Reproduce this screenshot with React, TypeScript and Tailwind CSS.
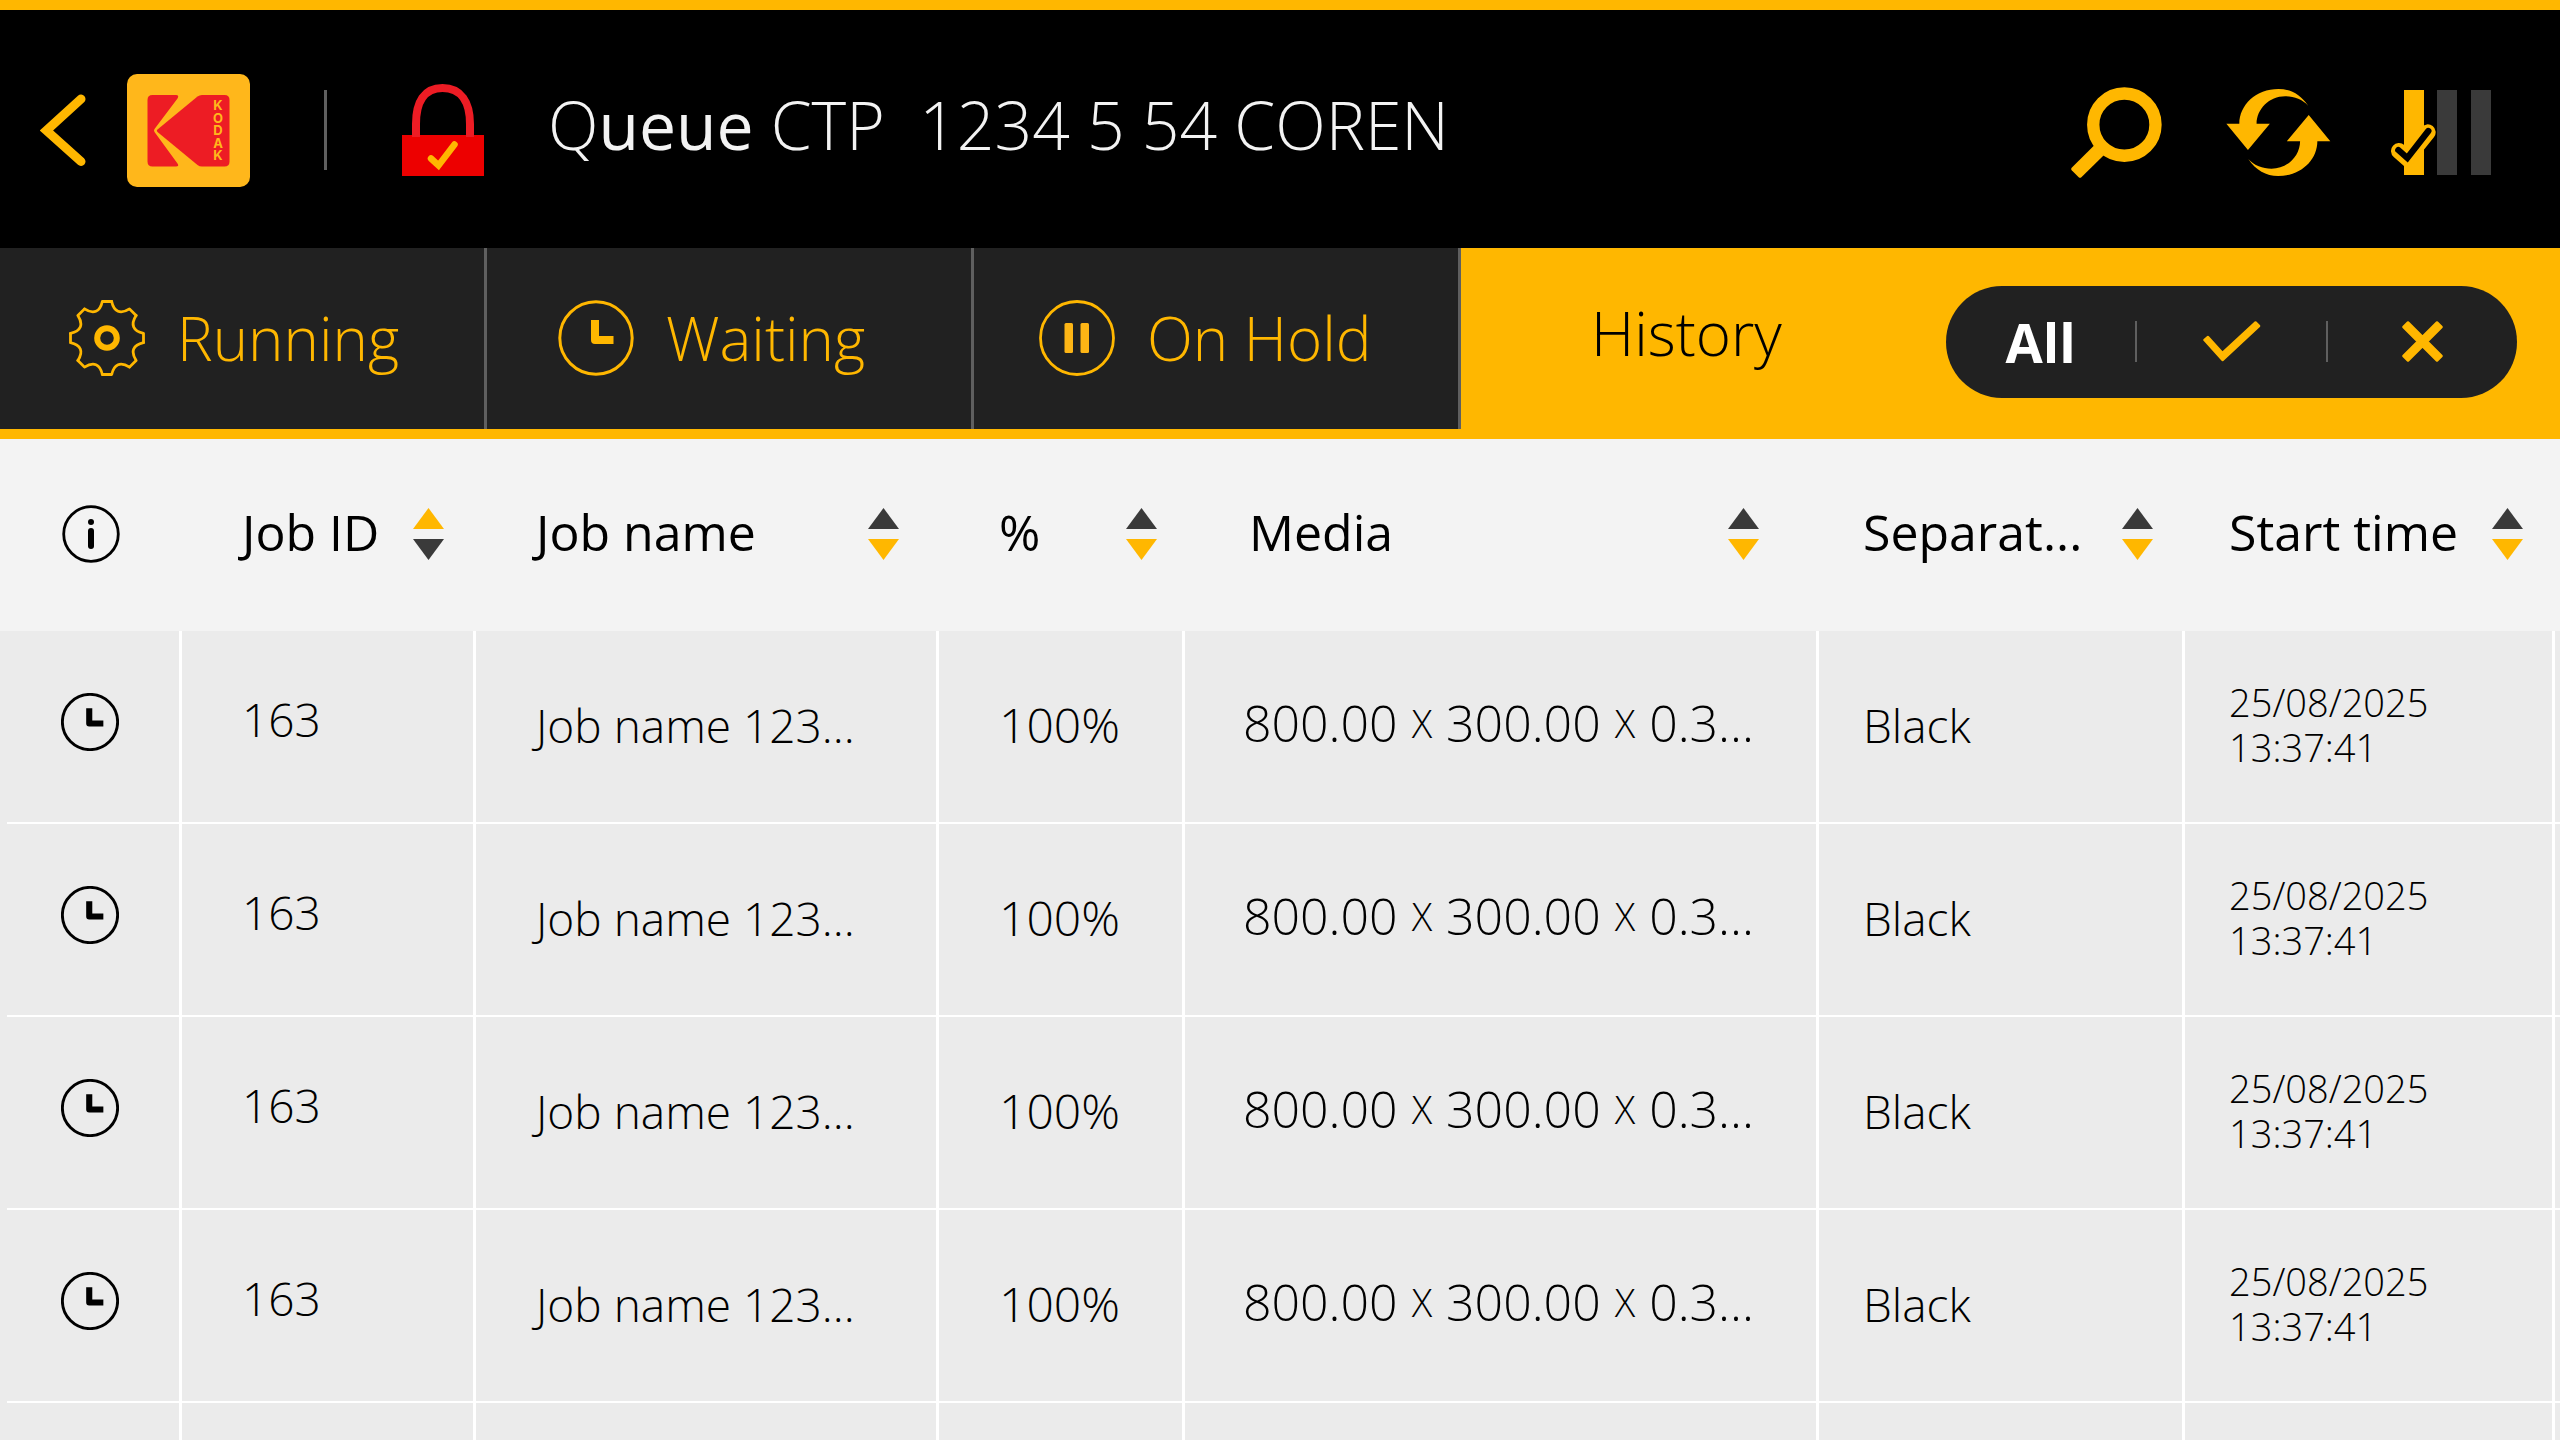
import React, { useState } from 'react';

type Filter = 'all' | 'done' | 'failed';

interface Column {
  key: string;
  label: string;
  width: string;
  padding: string;
}

const columns: Column[] = [
  { key: 'id', label: 'Job ID', width: 'w-[294px]', padding: 'pl-[60px] pr-8' },
  { key: 'name', label: 'Job name', width: 'w-[463px]', padding: 'pl-[60px] pr-10' },
  { key: 'percent', label: '%', width: 'w-[246px]', padding: 'pl-[60px] pr-7' },
  { key: 'media', label: 'Media', width: '', padding: 'pl-16 pr-[60px]' },
  { key: 'separation', label: 'Separat...', width: 'w-[366px]', padding: 'pl-11 pr-8' },
  { key: 'start', label: 'Start time', width: 'w-[370px]', padding: 'pl-11 pr-8' },
];

const jobs = Array.from({ length: 4 }, (_, i) => ({
  key: i,
  id: '163',
  name: 'Job name 123...',
  percent: '100%',
  size: ['800.00', '300.00', '0.3...'],
  separation: 'Black',
  date: '25/08/2025',
  time: '13:37:41',
}));

const cell = 'border-r-3 border-b-2 border-white p-0';

function ClockIcon({ className, stroke = 3 }: { className: string; stroke?: number }) {
  return (
    <svg viewBox="-38 -38 76 76" className={className} fill="none" stroke="currentColor">
      <circle r="36.2" strokeWidth={stroke} />
      <path d="M-1 -14V2H13.5" strokeWidth="8" strokeLinecap="square" strokeLinejoin="round" />
    </svg>
  );
}

function GearIcon() {
  return (
    <svg viewBox="-38 -38 76 76" className="size-[76px] shrink-0" fill="none" stroke="currentColor">
      {[0, 45, 90, 135, 180, 225, 270, 315].map((angle) => (
        <path
          key={angle}
          transform={`rotate(${angle})`}
          d="M4.7 -36.5H-4.7C-7 -26 -13.5 -23.3 -22.5 -29.1"
          strokeWidth="2.8"
          strokeLinecap="round"
          strokeLinejoin="round"
        />
      ))}
      <circle r="9.8" strokeWidth="6" />
    </svg>
  );
}

function PauseIcon() {
  return (
    <svg viewBox="-38 -38 76 76" className="size-[76px] shrink-0" fill="none" stroke="currentColor">
      <circle r="36.5" strokeWidth="2.8" />
      <rect x="-12.5" y="-15" width="8.5" height="30" rx="1.5" fill="#fdb515" stroke="none" />
      <rect x="3.5" y="-15" width="8.5" height="30" rx="1.5" fill="#fdb515" stroke="none" />
    </svg>
  );
}

function InfoIcon() {
  return (
    <svg viewBox="-29 -29 58 58" className="size-[58px]" fill="none" stroke="currentColor">
      <circle r="27.3" strokeWidth="2.8" />
      <circle cy="-12" r="3" fill="currentColor" stroke="none" />
      <path d="M0 -3V12" strokeWidth="6" strokeLinecap="round" />
    </svg>
  );
}

function Logo() {
  return (
    <svg viewBox="0 0 123 113" className="h-[113px] w-[123px]">
      <rect width="123" height="113" rx="10" fill="#ffb71b" />
      <path
        d="M25.5 21H49Q52.500 21 50.500 24.500L27.500 55Q26.500 56.500 27.500 58L50.500 89.500Q52.500 92.500 49 92.500H25.500Q20.500 92.500 20.500 87.500V26Q20.500 21 25.500 21Z"
        fill="#ed1c24"
      />
      <path
        d="M75 21H97.500Q102.500 21 102.500 26V87.500Q102.500 92.500 97.500 92.500H75Q72.500 92.500 70.500 91L30.500 58Q29 56.700 30.500 55.400L70.500 22.500Q72.500 21 75 21Z"
        fill="#ed1c24"
      />
      {['K', 'O', 'D', 'A', 'K'].map((letter, i) => (
        <text
          key={i}
          x="91"
          y={36 + i * 12.6}
          textAnchor="middle"
          fontSize="13"
          className="font-['Inter',sans-serif] font-bold"
          fill="#ffb71b"
        >
          {letter}
        </text>
      ))}
    </svg>
  );
}

function LockIcon() {
  return (
    <svg viewBox="0 0 82 92" className="h-[92px] w-[82px]" fill="none">
      <rect y="51" width="82" height="41" fill="#ed0000" />
      <path d="M14 53V40C14 18 22 4 40.500 4S68 18 68 40V53" stroke="#ed1c24" strokeWidth="8" />
      <path d="M29 74.500L36.500 81.500L52.500 60.500" stroke="#ffb700" strokeWidth="6.500" strokeLinecap="round" />
    </svg>
  );
}

function SearchIcon() {
  return (
    <svg viewBox="95 80 272 272" className="size-[91px]" fill="none">
      <circle cx="254.500" cy="192.500" r="93" stroke="#ffb700" strokeWidth="37" />
      <path d="M164 255L97 321Q94 325 97 329L118 350Q122 353 126 350L193 284Z" fill="#ffb700" />
    </svg>
  );
}

function RefreshIcon() {
  const arrow =
    'M600 192C600 135 650 87 718 87C755 87 785 104 808 138C790 118 765 109 738 109C690 109 652 148 652 192H692L626 271L561 192Z';
  return (
    <svg viewBox="561 87 314 262" className="h-[87px] w-[105px]" fill="#ffb700">
      <path d={arrow} />
      <path d={arrow} transform="rotate(180 717.500 218)" />
    </svg>
  );
}

function PlatesIcon() {
  return (
    <svg viewBox="1053 90 300 255" className="h-[85px] w-[100px]" fill="none">
      <rect x="1092" y="90" width="60" height="255" fill="#ffb700" />
      <rect x="1191" y="90" width="60" height="255" fill="#3a3a3a" />
      <rect x="1293" y="90" width="60" height="255" fill="#3a3a3a" />
      <path d="M1077 273L1101 294L1163 217" stroke="#ffb700" strokeWidth="48" strokeLinecap="round" />
      <path d="M1075 270L1102 294L1165 213" stroke="#000" strokeWidth="19" strokeLinecap="round" />
    </svg>
  );
}

function CheckIcon() {
  return (
    <svg viewBox="0 0 58 41" className="h-[41px] w-[58px]" fill="currentColor" stroke="currentColor">
      <path d="M1.500 19L5 16L19.500 32L52.500 1.500L56 5L19.500 39Z" strokeWidth="2.500" strokeLinejoin="round" />
    </svg>
  );
}

function CrossIcon() {
  return (
    <svg viewBox="0 0 41 41" className="size-[41px]" fill="currentColor" stroke="currentColor">
      <path
        d="M1.500 6L6 1.500L20.500 16L35 1.500L39.500 6L25 20.500L39.500 35L35 39.500L20.500 25L6 39.500L1.500 35L16 20.500Z"
        strokeWidth="2.500"
        strokeLinejoin="round"
      />
    </svg>
  );
}

function SortArrows({ ascending }: { ascending: boolean }) {
  return (
    <svg viewBox="0 0 31 52" className="h-[52px] w-[31px] shrink-0">
      <path d="M15.500 0L31 21H0Z" fill={ascending ? '#ffb700' : '#3a3a3a'} />
      <path d="M15.500 52L0 31H31Z" fill={ascending ? '#3a3a3a' : '#ffb700'} />
    </svg>
  );
}

export default function App() {
  const [filter, setFilter] = useState<Filter>('all');
  const [sortKey, setSortKey] = useState('id');

  const tab =
    'flex w-[487px] items-center gap-8 border-r-3 border-[#5f5f5f] bg-[#212121] pb-0.5 text-[60px] leading-none font-light text-[#ffb700]';

  return (
    <div className="flex h-screen flex-col overflow-hidden bg-[#ebebeb] font-['Open_Sans','Noto_Sans',sans-serif] text-black">
      <header className="flex h-[248px] shrink-0 items-center border-t-10 border-[#ffb700] bg-black pt-0.5 pr-[69px] pl-10">
        <button aria-label="Back" className="mr-[41px]">
          <svg viewBox="0 0 46 72" className="h-[72px] w-[46px]" fill="none" stroke="#ffb700" strokeWidth="9">
            <path d="M41 5L6.500 36.500L41 67.500" strokeLinecap="round" />
          </svg>
        </button>
        <Logo />
        <div className="mr-[75px] ml-[74px] h-20 w-[3px] bg-[#5f5f5f]" />
        <LockIcon />
        <h1 className="ml-16 pb-3 text-[66px] leading-none font-light whitespace-pre text-[#f3f3f3]">
          Q<span className="font-medium">ueue</span> CTP{'  '}1234 5 54 COREN
        </h1>
        <div className="mt-1 ml-auto flex items-center">
          <button aria-label="Search" className="mr-16">
            <SearchIcon />
          </button>
          <button aria-label="Refresh" className="mr-[60px]">
            <RefreshIcon />
          </button>
          <button aria-label="Plate status">
            <PlatesIcon />
          </button>
        </div>
      </header>

      <nav className="flex h-[191px] shrink-0 border-b-10 border-[#ffb700] bg-[#ffb700]">
        <button className={`${tab} pl-[69px]`}>
          <GearIcon />
          Running
        </button>
        <button className={`${tab} pl-[71px]`}>
          <ClockIcon className="size-[76px] shrink-0" />
          Waiting
        </button>
        <button className={`${tab} pl-[65px]`}>
          <PauseIcon />
          On Hold
        </button>
        <div className="flex flex-1 items-center justify-between pr-[43px] pl-[130px]">
          <button className="pb-3 text-[60px] leading-none font-light">History</button>
          <div className="mt-1.5 flex h-28 w-[571px] items-center rounded-full bg-[#212121] text-[#ffb700]">
            <button
              onClick={() => setFilter('all')}
              aria-pressed={filter === 'all'}
              className="flex-1 text-[54px] leading-none font-bold text-white"
            >
              All
            </button>
            <div className="h-[41px] w-0.5 bg-[#5f5f5f]" />
            <button
              onClick={() => setFilter('done')}
              aria-pressed={filter === 'done'}
              aria-label="Completed"
              className="flex flex-1 justify-center"
            >
              <CheckIcon />
            </button>
            <div className="h-[41px] w-0.5 bg-[#5f5f5f]" />
            <button
              onClick={() => setFilter('failed')}
              aria-pressed={filter === 'failed'}
              aria-label="Failed"
              className="flex flex-1 justify-center"
            >
              <CrossIcon />
            </button>
          </div>
        </div>
      </nav>

      <table className="w-full table-fixed border-separate border-spacing-0">
        <thead className="bg-[#f3f3f3]">
          <tr className="h-48">
            <th className="w-[182px] p-0 pb-0.5 pl-[62px]">
              <InfoIcon />
            </th>
            {columns.map((col) => (
              <th key={col.key} className={`${col.width} p-0 pb-0.5 font-normal`}>
                <button
                  onClick={() => setSortKey(col.key)}
                  className={`${col.padding} flex w-full items-center justify-between text-[50px] leading-none whitespace-nowrap`}
                >
                  <span className="pb-1">{col.label}</span>
                  <SortArrows ascending={sortKey === col.key} />
                </button>
              </th>
            ))}
            <th className="w-[5px] p-0" />
          </tr>
        </thead>
        <tbody className="text-[46px] leading-none font-light whitespace-nowrap">
          {jobs.map((job) => (
            <tr key={job.key} className="h-[193px]">
              <td className="relative border-r-3 border-white p-0 pb-3 pl-[61px] after:absolute after:right-0 after:bottom-0 after:left-[7px] after:h-0.5 after:bg-white">
                <ClockIcon className="size-[58px]" stroke={3.8} />
              </td>
              <td className={`${cell} pb-4 pl-[60px]`}>{job.id}</td>
              <td className={`${cell} pb-1 pl-[60px]`}>{job.name}</td>
              <td className={`${cell} pb-1 pl-[60px] text-[48px]`}>{job.percent}</td>
              <td className={`${cell} pb-2 pl-[58px]`}>
                <div className="flex items-center gap-3.5 text-[50px]">
                  {job.size[0]}
                  <span className="text-[38px]">X</span>
                  {job.size[1]}
                  <span className="text-[38px]">X</span>
                  {job.size[2]}
                </div>
              </td>
              <td className={`${cell} pb-1 pl-11`}>{job.separation}</td>
              <td className={`${cell} pb-1 pl-11 text-[38px] leading-[45px]`}>
                {job.date}
                <br />
                {job.time}
              </td>
              <td className="border-b-2 border-white p-0" />
            </tr>
          ))}
          {/* empty row keeps the grid lines running to the bottom */}
          <tr className="h-[193px]">
            <td className="border-r-3 border-white p-0" />
            {columns.map((col) => (
              <td key={col.key} className={cell} />
            ))}
            <td className="p-0" />
          </tr>
        </tbody>
      </table>
    </div>
  );
}
